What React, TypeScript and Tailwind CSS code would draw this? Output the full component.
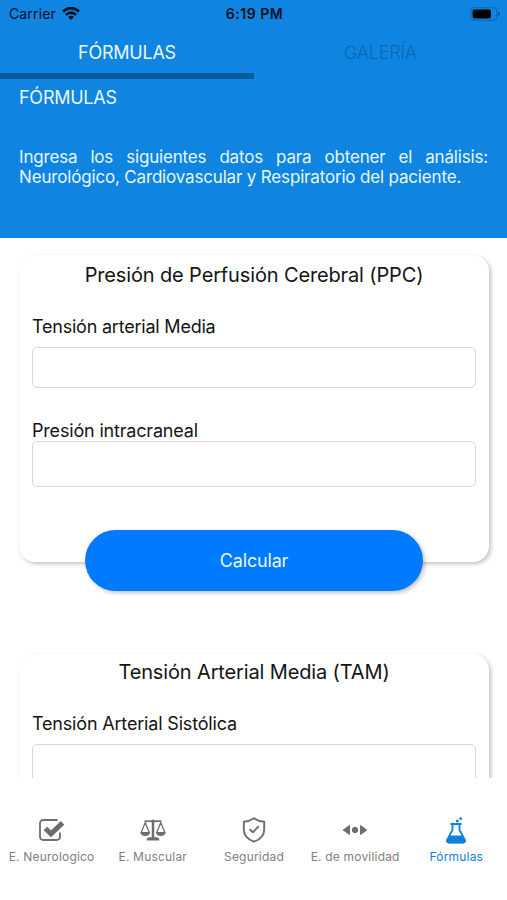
import type { ReactNode } from "react";

function WifiIcon() {
  return (
    <svg viewBox="0 0 18 13" className="h-[13px] w-[18px]" fill="none" stroke="#02101c">
      <path d="M1 4.6 Q9 -2.4 17 4.6" strokeWidth="2.7" />
      <path d="M3.9 7.9 Q9 3.3 14.1 7.9" strokeWidth="2.5" />
      <path d="M9 13 L6 9.9 Q9 7.4 12 9.9 Z" fill="#02101c" stroke="none" />
    </svg>
  );
}

function BatteryIcon() {
  return (
    <svg viewBox="0 0 30 14" className="h-[14px] w-[30px]">
      <rect x="0.8" y="0.8" width="26" height="12.4" rx="3.6" fill="none" stroke="#0a65ab" strokeWidth="1.1" />
      <rect x="2.6" y="2.5" width="18.3" height="9" rx="2" fill="#000" />
      <path d="M28 4.8 Q30 5.5 30 7 Q30 8.5 28 9.2 Z" fill="#0a5897" />
    </svg>
  );
}

function CheckBoxIcon() {
  return (
    <svg viewBox="0 0 27 24" className="h-6 w-[27px]" fill="none" stroke="#6e6e6e">
      <path d="M19.5 2H5.5Q2 2 2 5.500V18.500Q2 22 5.500 22H18.500Q22 22 22 18.500V14.500" strokeWidth="1.8" />
      <path d="M7.400 10.500L13 15.900L24.600 4.900" strokeWidth="5" />
    </svg>
  );
}

function ScaleIcon() {
  return (
    <svg viewBox="0 0 26 22" className="h-[22px] w-[26px]" fill="none" stroke="#6e6e6e">
      <path d="M4.500 2.200H21.500" strokeWidth="1.700" />
      <circle cx="13" cy="2.200" r="1.700" fill="#6e6e6e" stroke="none" />
      <path d="M13 2V19" strokeWidth="2.400" />
      <path d="M6.800 21.500V20.300Q7 18.200 9.500 18.200H16.500Q19 18.200 19.200 20.300V21.500Z" fill="#6e6e6e" stroke="none" />
      <path d="M1.200 13.500L5.200 3.500L9.200 13.500M16.800 13.500L20.800 3.500L24.800 13.500" strokeWidth="1.300" strokeLinejoin="round" />
      <path d="M0.200 12.900H10.200Q9.500 17 5.200 17Q0.900 17 0.200 12.900ZM15.800 12.900H25.800Q25.100 17 20.800 17Q16.500 17 15.800 12.900Z" fill="#6e6e6e" stroke="none" />
    </svg>
  );
}

function ShieldIcon() {
  return (
    <svg viewBox="0 0 24 26" className="h-[26px] w-6" fill="none" stroke="#6e6e6e" strokeLinejoin="round" strokeLinecap="round">
      <path d="M12 1.300C9 3.400 5.500 4.600 1.800 4.800V12.500C1.800 18.500 5.700 22.500 12 24.700C18.300 22.500 22.200 18.500 22.200 12.500V4.800C18.500 4.600 15 3.400 12 1.300Z" strokeWidth="1.900" />
      <path d="M8.200 12.700L11 15.300L16.200 9.700" strokeWidth="1.900" />
    </svg>
  );
}

function MoveIcon() {
  return (
    <svg viewBox="0 0 26 12" className="h-3 w-[26px]" fill="#6e6e6e" stroke="#6e6e6e" strokeLinejoin="round">
      <path d="M1.200 6L7.500 1.500V10.500Z" />
      <circle cx="13" cy="6" r="2.700" />
      <path d="M24.800 6L18.500 1.500V10.500Z" />
    </svg>
  );
}

function FlaskIcon() {
  return (
    <svg viewBox="0 0 22 27" className="h-[27px] w-[22px]">
      <path d="M5.500 7H16.500M7.500 7V13L2.400 22.300Q1 25.500 4 25.500H18Q21 25.500 19.600 22.300L14.500 13V7" fill="none" stroke="#1181dc" strokeWidth="1.800" />
      <path d="M4.500 18.500H17.500L20.300 22.800Q21.300 26.300 18 26.300H4Q0.700 26.300 1.700 22.800Z" fill="#1181dc" />
      <circle cx="12.300" cy="4" r="1.500" fill="#1181dc" />
      <circle cx="15.700" cy="1.700" r="1.400" fill="#1181dc" />
    </svg>
  );
}

function Card({ title, className, children }: { title: string; className: string; children: ReactNode }) {
  return (
    <section className={"mx-[19px] flex h-[307px] w-[470px] shrink-0 flex-col rounded-2xl bg-white px-[13px] shadow-[2px_2px_4px_0px_rgba(0,0,0,0.24)] " + className}>
      <h2 className="text-center text-[20px] leading-[26px] tracking-[-0.007em] whitespace-nowrap">{title}</h2>
      {children}
    </section>
  );
}

function Tab({ icon, label, labelClass }: { icon: ReactNode; label: string; labelClass: string }) {
  return (
    <button className="flex w-1/5 flex-col items-center">
      <span className="flex h-[30px] items-center justify-center">{icon}</span>
      <span className={"mt-[4px] text-[12px] leading-4 tracking-[0.016em] whitespace-nowrap " + labelClass}>{label}</span>
    </button>
  );
}

export default function App() {
  return (
    <div className="flex h-[900px] w-[507px] flex-col overflow-hidden bg-white font-['Inter',sans-serif] text-[#141414]">
      <header className="flex h-[238px] shrink-0 flex-col bg-[#0f84e0] text-[#e6f8ff]">
        <div className="grid h-[27px] grid-cols-3 items-center pr-[7px] pl-[9px] text-[#02101c]">
          <div className="flex items-center gap-[6px]">
            <span className="text-[14px] leading-5 tracking-[0.01em]">Carrier</span>
            <WifiIcon />
          </div>
          <span className="text-center text-[14px] leading-5 font-semibold tracking-[0.04em]">6:19 PM</span>
          <div className="flex justify-end"><BatteryIcon /></div>
        </div>
        <nav className="flex h-[52px] text-[18px] leading-[52px]">
          <span className="h-[52px] w-[254px] border-b-[6px] border-[#075c9d] text-center tracking-[-0.014em]">FÓRMULAS</span>
          <span className="w-[253px] text-center font-extralight tracking-[-0.003em] text-[#0b5d9e]">GALERÍA</span>
        </nav>
        <div className="flex flex-col px-[19px]">
          <h1 className="pt-[7px] text-[18px] leading-6 tracking-[-0.014em]">FÓRMULAS</h1>
          <p className="mt-[37px] text-justify text-[17px] leading-5 tracking-[-0.01em]">
            Ingresa los siguientes datos para obtener el análisis: Neurológico, Cardiovascular y Respiratorio del paciente.
          </p>
        </div>
      </header>
      <main className="flex h-[540px] shrink-0 flex-col overflow-hidden pt-[17px]">
        <Card title="Presión de Perfusión Cerebral (PPC)" className="pt-[7px]">
          <label className="mt-[27px] text-[18px] leading-6 tracking-[-0.012em]">Tensión arterial Media</label>
          <input className="mt-[8px] h-[41px] w-full shrink-0 rounded-[5px] border-[1.5px] border-[#d6d6d6]" />
          <label className="mt-[31px] text-[18px] leading-6 tracking-[-0.01em]">Presión intracraneal</label>
          <input className="-mt-[2px] h-[46px] w-full shrink-0 rounded-[5px] border-[1.5px] border-[#d6d6d6]" />
          <button className="mt-[43px] h-[61px] w-[338px] shrink-0 self-center rounded-full bg-[#007bff] text-[18px] leading-6 tracking-[-0.01em] text-[#e6f8ff] shadow-[2px_2px_4px_0px_rgba(0,0,0,0.24)]">
            Calcular
          </button>
        </Card>
        <div className="h-[92px] shrink-0" />
        <Card title="Tensión Arterial Media (TAM)" className="pt-[5px]">
          <label className="mt-[27px] text-[18px] leading-6 tracking-[-0.01em]">Tensión Arterial Sistólica</label>
          <input className="mt-[8px] h-[41px] w-full shrink-0 rounded-[5px] border-[1.5px] border-[#d6d6d6]" />
        </Card>
      </main>
      <footer className="flex h-[122px] shrink-0 bg-white pt-[37px] pl-px text-[#808080]">
        <Tab icon={<CheckBoxIcon />} label="E. Neurologico" labelClass="" />
        <Tab icon={<ScaleIcon />} label="E. Muscular" labelClass="" />
        <Tab icon={<ShieldIcon />} label="Seguridad" labelClass="" />
        <Tab icon={<MoveIcon />} label="E. de movilidad" labelClass="" />
        <Tab icon={<FlaskIcon />} label="Fórmulas" labelClass="text-[#1181dc]" />
      </footer>
    </div>
  );
}
